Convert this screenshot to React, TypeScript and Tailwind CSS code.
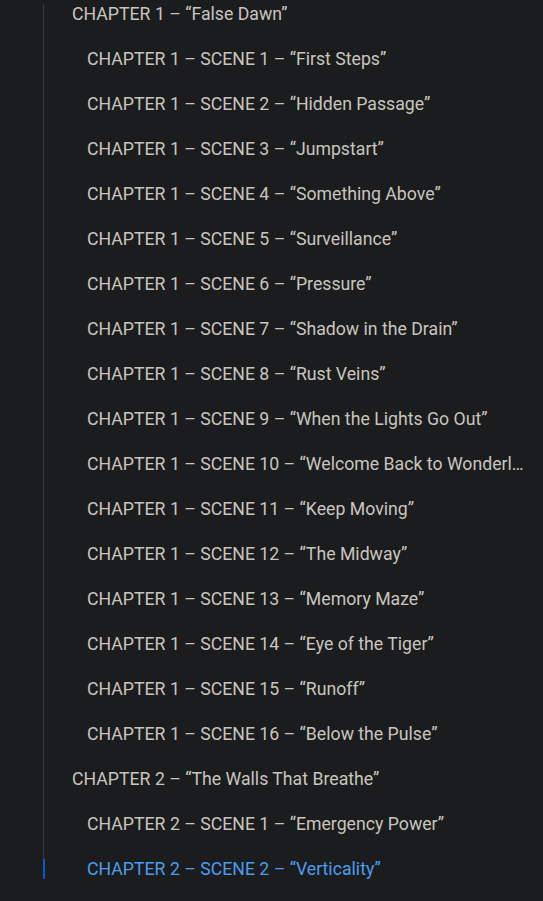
import React from "react";

type Item = { text: string; level: 0 | 1; active?: boolean };

const items: Item[] = [
  { text: "CHAPTER 1 – “False Dawn”", level: 0 },
  { text: "CHAPTER 1 – SCENE 1 – “First Steps”", level: 1 },
  { text: "CHAPTER 1 – SCENE 2 – “Hidden Passage”", level: 1 },
  { text: "CHAPTER 1 – SCENE 3 – “Jumpstart”", level: 1 },
  { text: "CHAPTER 1 – SCENE 4 – “Something Above”", level: 1 },
  { text: "CHAPTER 1 – SCENE 5 – “Surveillance”", level: 1 },
  { text: "CHAPTER 1 – SCENE 6 – “Pressure”", level: 1 },
  { text: "CHAPTER 1 – SCENE 7 – “Shadow in the Drain”", level: 1 },
  { text: "CHAPTER 1 – SCENE 8 – “Rust Veins”", level: 1 },
  { text: "CHAPTER 1 – SCENE 9 – “When the Lights Go Out”", level: 1 },
  { text: "CHAPTER 1 – SCENE 10 – “Welcome Back to Wonderland”", level: 1 },
  { text: "CHAPTER 1 – SCENE 11 – “Keep Moving”", level: 1 },
  { text: "CHAPTER 1 – SCENE 12 – “The Midway”", level: 1 },
  { text: "CHAPTER 1 – SCENE 13 – “Memory Maze”", level: 1 },
  { text: "CHAPTER 1 – SCENE 14 – “Eye of the Tiger”", level: 1 },
  { text: "CHAPTER 1 – SCENE 15 – “Runoff”", level: 1 },
  { text: "CHAPTER 1 – SCENE 16 – “Below the Pulse”", level: 1 },
  { text: "CHAPTER 2 – “The Walls That Breathe”", level: 0 },
  { text: "CHAPTER 2 – SCENE 1 – “Emergency Power”", level: 1 },
  { text: "CHAPTER 2 – SCENE 2 – “Verticality”", level: 1, active: true },
];

export default function App() {
  return (
    <div
      className="w-[543px] h-[901px] overflow-hidden bg-[#1b1c1e] pt-[4px]"
      style={{ fontFamily: "Roboto, 'Liberation Sans', sans-serif" }}
    >
      <div className="ml-[43px] -mt-[12px] flex flex-col">
        {items.map((it, i) => (
          <div key={i} className="flex h-[45px] items-stretch">
            <div className="w-[2px] flex flex-col">
              {it.active ? (
                <>
                  <div className="h-[12px] w-[1px] bg-[#38393b]" />
                  <div className="h-[20px] w-[2px] bg-[#0b57d0]" />
                </>
              ) : (
                <div
                  className={
                    i === 0
                      ? "mt-[12px] flex-1 w-[1px] bg-[#38393b]"
                      : "flex-1 w-[1px] bg-[#38393b]"
                  }
                />
              )}
            </div>
            <div
              className={
                (it.level === 0 ? "pl-[27px] " : "pl-[42px] ") +
                (it.active ? "text-[#4c9cec] " : "text-[#c8c5bf] ") +
                "flex min-w-0 flex-1 items-center pr-[14px] text-[17.7px]"
              }
            >
              <span className="truncate">{it.text}</span>
            </div>
          </div>
        ))}
      </div>
    </div>
  );
}
